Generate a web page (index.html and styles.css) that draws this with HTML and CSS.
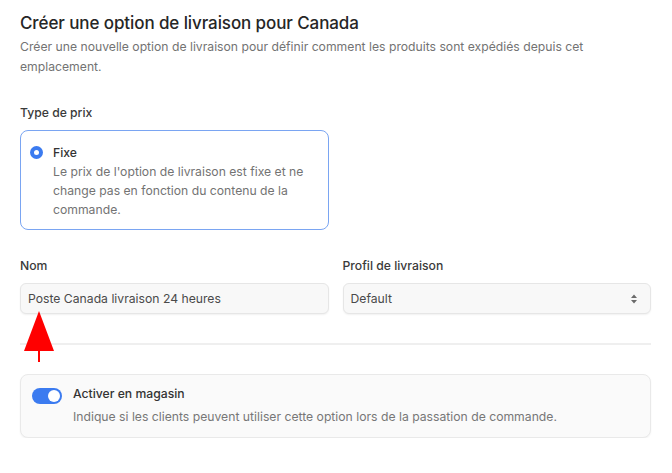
FILE: index.html
```html
<!DOCTYPE html>
<html lang="fr">
<head>
<meta charset="utf-8">
<link rel="stylesheet" href="styles.css">
</head>
<body>
<div class="page">
  <h1 class="title">Créer une option de livraison pour Canada</h1>
  <p class="subtitle">Créer une nouvelle option de livraison pour définir comment les produits sont expédiés depuis cet emplacement.</p>

  <div class="label price-label">Type de prix</div>
  <div class="radio-card">
    <span class="radio"></span>
    <div class="radio-text">
      <div class="radio-title">Fixe</div>
      <div class="radio-desc">Le prix de l'option de livraison est fixe et ne change pas en fonction du contenu de la commande.</div>
    </div>
  </div>

  <div class="fields">
    <div class="field">
      <div class="label">Nom</div>
      <div class="input">Poste Canada livraison 24 heures</div>
    </div>
    <div class="field">
      <div class="label">Profil de livraison</div>
      <div class="input select">
        <span>Default</span>
        <svg class="chev" width="8" height="12" viewBox="0 0 8 12"><path d="M4 1.5 L7 5 H1 Z M4 10.5 L7 7 H1 Z" fill="#6b6b6b"/></svg>
      </div>
    </div>
  </div>

  <div class="divider"></div>

  <div class="toggle-card">
    <span class="toggle"><span class="knob"></span></span>
    <div class="toggle-text">
      <div class="toggle-title">Activer en magasin</div>
      <div class="toggle-desc">Indique si les clients peuvent utiliser cette option lors de la passation de commande.</div>
    </div>
  </div>

  <svg class="arrow" width="34" height="54" viewBox="0 0 34 54"><polygon points="17,0 32,40 2,40" fill="#ff0000"/><rect x="16" y="40" width="2" height="11" fill="#ff0000"/></svg>
</div>
</body>
</html>
```

FILE: styles.css
```css
* { box-sizing: border-box; }
html, body { margin: 0; padding: 0; background: #ffffff; }
body { font-family: Inter, "Noto Sans", sans-serif; color: #303030; }
.page { position: relative; padding: 11px 21px 0 20px; }
.title { margin: 0; font-size: 17px; line-height: 24px; font-weight: 500; color: #262626; letter-spacing: -0.1px; }
.subtitle { margin: 2px 0 0; font-size: 12.2px; line-height: 20px; color: #737373; width: 600px; }
.label { font-size: 12.2px; line-height: 20px; font-weight: 500; color: #3a3a3a; }
.price-label { margin-top: 26px; }
.radio-card { margin-top: 7px; width: 309px; border: 1.5px solid #7aa5f2; border-radius: 8px; padding: 12px 10px 10px 9px; display: flex; gap: 10px; }
.radio { flex: none; width: 13px; height: 13px; margin-top: 3px; border-radius: 50%; background: #3b7bf0; position: relative; }
.radio::after { content: ""; position: absolute; left: 4px; top: 4px; width: 5px; height: 5px; border-radius: 50%; background: #fff; }
.radio-title { font-size: 12.2px; line-height: 19px; font-weight: 500; color: #333; }
.radio-desc { font-size: 12.2px; line-height: 19px; color: #737373; }
.fields { margin-top: 26px; display: grid; grid-template-columns: 1fr 1fr; gap: 14px; }
.field .label { margin-bottom: 7px; }
.input { height: 31px; border: 1px solid #e6e6e6; border-radius: 6px; background: #f8f8f8; box-shadow: 0 1px 2px rgba(0,0,0,0.06); font-size: 12.2px; color: #4a4a4a; padding: 0 7px; display: flex; align-items: center; }
.select { justify-content: space-between; padding-right: 12px; }
.chev { display: block; }
.divider { margin-top: 29px; height: 2px; background: #efefef; }
.toggle-card { margin-top: 29px; height: 64px; border: 1px solid #e9e9e9; border-radius: 8px; background: #fafafa; box-shadow: 0 1px 2px rgba(0,0,0,0.05); padding: 9px 11px; display: flex; gap: 11px; }
.toggle { flex: none; width: 30px; height: 16px; margin-top: 4px; border-radius: 8px; background: #3b7bf0; position: relative; }
.knob { position: absolute; right: 2px; top: 2px; width: 12px; height: 12px; border-radius: 50%; background: #fff; }
.toggle-title { font-size: 12.2px; line-height: 20px; font-weight: 500; color: #333; }
.toggle-desc { margin-top: 3px; font-size: 12.2px; line-height: 20px; color: #777; }
.arrow { position: absolute; left: 22px; top: 311px; }
```
